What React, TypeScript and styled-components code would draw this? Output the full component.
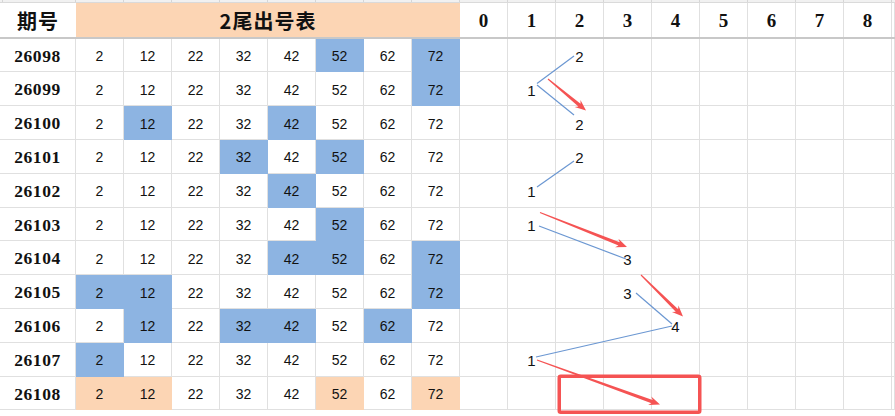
import React from 'react';
import styled, { createGlobalStyle } from 'styled-components';

type RowData = {
  id: string;
  hits: number[];
  trend: number | null;
  forecast?: boolean;
};

const NUMBERS = [2, 12, 22, 32, 42, 52, 62, 72];
const TREND_COLS = [0, 1, 2, 3, 4, 5, 6, 7, 8];

const rows: RowData[] = [
  { id: '26098', hits: [52, 72], trend: 2 },
  { id: '26099', hits: [72], trend: 1 },
  { id: '26100', hits: [12, 42], trend: 2 },
  { id: '26101', hits: [32, 52], trend: 2 },
  { id: '26102', hits: [42], trend: 1 },
  { id: '26103', hits: [52], trend: 1 },
  { id: '26104', hits: [42, 52, 72], trend: 3 },
  { id: '26105', hits: [2, 12, 72], trend: 3 },
  { id: '26106', hits: [12, 32, 42, 62], trend: 4 },
  { id: '26107', hits: [2], trend: 1 },
  { id: '26108', hits: [2, 12, 52, 72], trend: null, forecast: true },
];

// connecting lines drawn by hand over the trend columns (page pixels)
const blueLines = [
  [574, 56, 537, 83.5],
  [537, 85, 574, 115],
  [574, 161, 537, 187],
  [539, 226, 626, 259],
  [636, 293, 672, 324],
  [672, 326, 536, 357],
];

const redArrows = [
  [548, 79, 586, 110.5],
  [540, 212.5, 627, 247],
  [641, 275, 683, 316.5],
  [537, 360, 660, 404.5],
];

function arrowPoints(x1: number, y1: number, x2: number, y2: number) {
  const dx = x2 - x1;
  const dy = y2 - y1;
  const len = Math.hypot(dx, dy);
  const ux = dx / len;
  const uy = dy / len;
  const nx = -uy;
  const ny = ux;
  const head = 11;
  const hw = 4.6;
  const w0 = 0.55;
  const w1 = 1.7;
  const bx = x2 - ux * head;
  const by = y2 - uy * head;
  const kx = x2 - ux * (head - 2.5);
  const ky = y2 - uy * (head - 2.5);
  const pts = [
    [x1 + nx * w0, y1 + ny * w0],
    [kx + nx * w1, ky + ny * w1],
    [bx + nx * hw, by + ny * hw],
    [x2, y2],
    [bx - nx * hw, by - ny * hw],
    [kx - nx * w1, ky - ny * w1],
    [x1 - nx * w0, y1 - ny * w0],
  ];
  return pts.map(p => `${p[0].toFixed(2)},${p[1].toFixed(2)}`).join(' ');
}

export default function App() {
  return (
    <>
      <GlobalStyle />
      <Sheet>
        <TopStrip>
          {Array.from({ length: 19 }).map((_, i) => (
            <StripCell key={i} />
          ))}
        </TopStrip>

        <HeaderRow>
          <IssueHead>期号</IssueHead>
          <TitleHead>2尾出号表</TitleHead>
          {TREND_COLS.map(n => (
            <DigitHead key={n}>{n}</DigitHead>
          ))}
          <DigitHead />
        </HeaderRow>

        {rows.map(r => (
          <DataRow key={r.id}>
            <IssueCell>{r.id}</IssueCell>
            {NUMBERS.map(n => (
              <NumCell
                key={n}
                $fill={r.hits.includes(n) ? (r.forecast ? 'peach' : 'blue') : 'none'}
              >
                {n}
              </NumCell>
            ))}
            {TREND_COLS.map(c => (
              <TrendCell key={c}>{r.trend === c ? c : ''}</TrendCell>
            ))}
            <TrendCell />
          </DataRow>
        ))}

        <Overlay width="895" height="416" viewBox="0 0 895 416">
          {blueLines.map((l, i) => (
            <line key={i} x1={l[0]} y1={l[1]} x2={l[2]} y2={l[3]} stroke="#6b97d2" strokeWidth="1.2" />
          ))}
          {redArrows.map((a, i) => (
            <polygon key={i} points={arrowPoints(a[0], a[1], a[2], a[3])} fill="#f55353" />
          ))}
          <rect x="559.25" y="376.25" width="140.5" height="36" rx="1.5" fill="none" stroke="#f55353" strokeWidth="3.5" />
        </Overlay>
      </Sheet>
    </>
  );
}

const GlobalStyle = createGlobalStyle`
  html, body {
    margin: 0;
    padding: 0;
    background: #fff;
    overflow: hidden;
  }
`;

const COLS = '76px repeat(17, 48px) 1fr';
const GRID = '#e0e0e0';

const Sheet = styled.div`
  position: relative;
  width: 895px;
  height: 416px;
  overflow: hidden;
  background: #fff;
  font-family: "Liberation Sans", "Noto Sans CJK SC", sans-serif;
  color: #111;
`;

const TopStrip = styled.div`
  display: grid;
  grid-template-columns: 3px 73px repeat(17, 48px) 1fr;
  height: 3px;
  background: #f1f1f1;
  border-bottom: 1px solid #dadada;
  box-sizing: border-box;
`;

const StripCell = styled.div`
  border-right: 1px solid #d6d6d6;
`;

const HeaderRow = styled.div`
  display: grid;
  grid-template-columns: ${COLS};
  height: 35.7px;
  box-sizing: border-box;
  border-bottom: 2px solid #c8c8c8;
`;

const HeadBase = styled.div`
  display: flex;
  align-items: center;
  justify-content: center;
  font-weight: bold;
  padding-top: 2px;
`;

const IssueHead = styled(HeadBase)`
  font-family: "Noto Sans CJK SC", sans-serif;
  font-size: 20px;
  letter-spacing: 1px;
`;

const TitleHead = styled(HeadBase)`
  grid-column: span 8;
  background: #fcd5b4;
  font-family: "Noto Sans CJK SC", sans-serif;
  font-size: 20px;
  letter-spacing: 1px;
`;

const DigitHead = styled(HeadBase)`
  font-family: "Liberation Serif", serif;
  font-size: 19px;
  border-right: 1px solid ${GRID};
`;

const DataRow = styled.div`
  display: grid;
  grid-template-columns: ${COLS};
  height: 33.8px;
`;

const CellBase = styled.div`
  display: flex;
  align-items: center;
  justify-content: center;
  box-sizing: border-box;
  padding-top: 2px;
  border-right: 1px solid ${GRID};
  border-bottom: 1px solid ${GRID};
`;

const IssueCell = styled(CellBase)`
  font-family: "Liberation Serif", serif;
  font-weight: bold;
  font-size: 17.5px;
  letter-spacing: 0.6px;
`;

const fills: Record<string, string> = {
  blue: '#8db4e2',
  peach: '#fcd5b4',
  none: '#fff',
};

const NumCell = styled(CellBase)<{ $fill: string }>`
  font-size: 14px;
  background: ${p => fills[p.$fill]};
  border-color: ${p => (p.$fill === 'none' ? GRID : fills[p.$fill])};
`;

const TrendCell = styled(CellBase)`
  font-size: 15px;
  padding-top: 3px;
`;

const Overlay = styled.svg`
  position: absolute;
  left: 0;
  top: 0;
  pointer-events: none;
`;
